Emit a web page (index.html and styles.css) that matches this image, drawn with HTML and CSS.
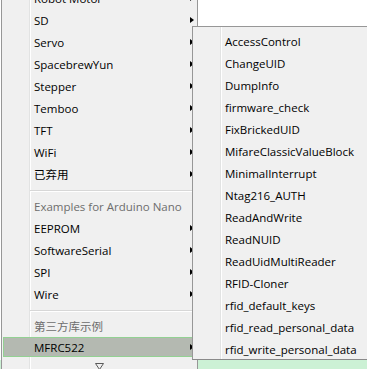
FILE: index.html
```html
<!DOCTYPE html>
<html lang="en">
<head>
    <title>Examples menu</title>
    <link rel="stylesheet" href="styles.css">
</head>
<body>
<div class="editor">
    <div class="code-area"></div>
    <div class="status-bar"></div>
</div>

<div class="menu main-menu">
    <div class="menu-item has-sub">Robot Motor</div>
    <div class="menu-item has-sub">SD</div>
    <div class="menu-item has-sub">Servo</div>
    <div class="menu-item has-sub">SpacebrewYun</div>
    <div class="menu-item has-sub">Stepper</div>
    <div class="menu-item has-sub">Temboo</div>
    <div class="menu-item has-sub">TFT</div>
    <div class="menu-item has-sub">WiFi</div>
    <div class="menu-item has-sub">已弃用</div>
    <div class="menu-sep"></div>
    <div class="menu-item disabled">Examples for Arduino Nano</div>
    <div class="menu-item has-sub">EEPROM</div>
    <div class="menu-item has-sub">SoftwareSerial</div>
    <div class="menu-item has-sub">SPI</div>
    <div class="menu-item has-sub">Wire</div>
    <div class="menu-sep"></div>
    <div class="menu-item disabled">第三方库示例</div>
    <div class="menu-item has-sub active">MFRC522</div>
    <div class="menu-scroll">
        <svg class="scroll-icon" viewBox="0 0 9 7">
            <polygon points="0.5 0.5 8.5 0.5 4.5 6.5"/>
        </svg>
    </div>
</div>

<div class="menu sub-menu">
    <div class="menu-item">AccessControl</div>
    <div class="menu-item">ChangeUID</div>
    <div class="menu-item">DumpInfo</div>
    <div class="menu-item">firmware_check</div>
    <div class="menu-item">FixBrickedUID</div>
    <div class="menu-item">MifareClassicValueBlock</div>
    <div class="menu-item">MinimalInterrupt</div>
    <div class="menu-item">Ntag216_AUTH</div>
    <div class="menu-item">ReadAndWrite</div>
    <div class="menu-item">ReadNUID</div>
    <div class="menu-item">ReadUidMultiReader</div>
    <div class="menu-item">RFID-Cloner</div>
    <div class="menu-item">rfid_default_keys</div>
    <div class="menu-item">rfid_read_personal_data</div>
    <div class="menu-item">rfid_write_personal_data</div>
</div>
</body>
</html>
```

FILE: styles.css
```css
:root {
    --menu-bg: #f0f0f0;
    --menu-border: #979797;
    --gutter-dark: #e2e3e3;
    --text: #000000;
    --text-disabled: #6d6d6d;
    --hover-bg: #b4b9b1;
    --hover-border: #93d193;
    --status: #ccf1d5;
}

* {
    margin: 0;
    padding: 0;
    box-sizing: border-box;
}

body {
    width: 367px;
    height: 369px;
    overflow: hidden;
    position: relative;
    font-family: "Open Sans", "Noto Sans CJK SC", sans-serif;
    font-size: 11.5px;
    color: var(--text);
    background: #ffffff;
}

.editor {
    display: flex;
    flex-direction: column;
    height: 100%;
}

.code-area {
    height: 360px;
    background: #ffffff;
}

.status-bar {
    flex: 1;
    background: var(--status);
}

/* popup menus float over the editor */
.menu {
    position: absolute;
    border: 1px solid var(--menu-border);
    background: linear-gradient(to right,
        var(--menu-bg) 0 27px,
        var(--gutter-dark) 27px 28px,
        #ffffff 28px 29px,
        var(--menu-bg) 29px);
}

.main-menu {
    left: 1px;
    top: -15px;
    width: 197px;
    height: 400px;
}

.sub-menu {
    left: 192px;
    top: 26px;
    width: 220px;
    padding-top: 2px;
    border-bottom-color: #8a8a8a;
}

.menu-item {
    display: flex;
    align-items: center;
    justify-content: space-between;
    height: 22px;
    padding: 2px 3px 0 32px;
    white-space: nowrap;
}

.has-sub::after {
    content: "";
    border-left: 4px solid #000000;
    border-top: 3.5px solid transparent;
    border-bottom: 3.5px solid transparent;
    margin-top: -1px;
}

.disabled {
    color: var(--text-disabled);
}

.active {
    height: 20px;
    margin: 1px;
    padding: 1px 1px 0 30px;
    background: var(--hover-bg);
    border: 1px solid var(--hover-border);
}

.menu-sep {
    height: 10px;
    margin-left: 28px;
    padding-top: 6px;
}

.menu-sep::before {
    content: "";
    display: block;
    height: 1px;
    background: #d7d7d7;
    box-shadow: 0 1px 0 #ffffff;
}

.menu-scroll {
    display: flex;
    justify-content: center;
    padding-top: 5px;
}

.scroll-icon {
    width: 9px;
    height: 7px;
    fill: none;
    stroke: #5a5a5a;
    stroke-width: 1;
}
```
